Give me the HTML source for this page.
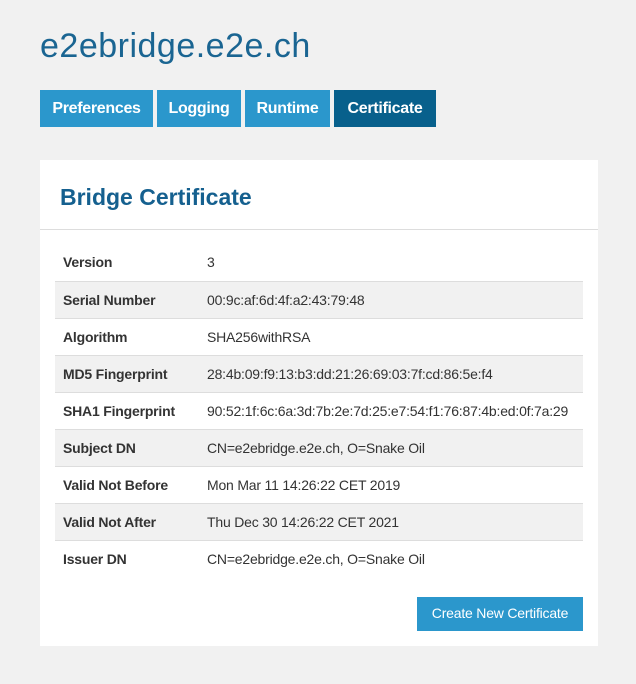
<!DOCTYPE html><html><head><style>
body{margin:0;background:#f1f1f1;font-family:"Liberation Sans",sans-serif;width:636px;height:684px;position:relative;overflow:hidden}
h1{position:absolute;left:40px;top:27px;margin:0;font-weight:normal;font-size:34px;color:#1a6592;letter-spacing:0.5px}
.tab{position:absolute;top:90px;height:37px;line-height:37px;background:#2b97cc;color:#fff;font-weight:bold;font-size:16px;text-align:center;letter-spacing:-0.3px}
.card{position:absolute;left:40px;top:160px;width:558px;height:486px;background:#fff}
.card h2{position:absolute;left:20px;top:24px;margin:0;font-size:23px;color:#15608f;letter-spacing:0}
.hr{position:absolute;left:0;top:69px;width:558px;height:1px;background:#ddd}
table{position:absolute;left:15px;top:83px;width:528px;border-collapse:collapse;font-size:14px;color:#333}
td{height:36px;padding:0 0 0 8px;border-top:1px solid #ddd;letter-spacing:-0.2px}
tr:first-child td{border-top:none;height:38px}
td.l{font-weight:bold;width:136px}
tr:nth-child(even) td{background:#f1f1f1}
.btn{position:absolute;left:377px;top:437px;width:166px;height:34px;line-height:33px;background:#2b97cc;color:#fff;font-size:14px;text-align:center;letter-spacing:-0.2px}
</style></head><body>
<h1>e2ebridge.e2e.ch</h1>
<div class="tab" style="left:40px;width:113px">Preferences</div>
<div class="tab" style="left:157px;width:84px">Logging</div>
<div class="tab" style="left:245px;width:85px">Runtime</div>
<div class="tab" style="left:334px;width:102px;background:#08608c">Certificate</div>
<div class="card"><h2>Bridge Certificate</h2><div class="hr"></div>
<table>
<tr><td class="l">Version</td><td>3</td></tr>
<tr><td class="l">Serial Number</td><td>00:9c:af:6d:4f:a2:43:79:48</td></tr>
<tr><td class="l">Algorithm</td><td>SHA256withRSA</td></tr>
<tr><td class="l">MD5 Fingerprint</td><td>28:4b:09:f9:13:b3:dd:21:26:69:03:7f:cd:86:5e:f4</td></tr>
<tr><td class="l">SHA1 Fingerprint</td><td>90:52:1f:6c:6a:3d:7b:2e:7d:25:e7:54:f1:76:87:4b:ed:0f:7a:29</td></tr>
<tr><td class="l">Subject DN</td><td>CN=e2ebridge.e2e.ch, O=Snake Oil</td></tr>
<tr><td class="l">Valid Not Before</td><td>Mon Mar 11 14:26:22 CET 2019</td></tr>
<tr><td class="l">Valid Not After</td><td>Thu Dec 30 14:26:22 CET 2021</td></tr>
<tr><td class="l">Issuer DN</td><td>CN=e2ebridge.e2e.ch, O=Snake Oil</td></tr>
</table>
<div class="btn">Create New Certificate</div>
</div>
</body></html>
